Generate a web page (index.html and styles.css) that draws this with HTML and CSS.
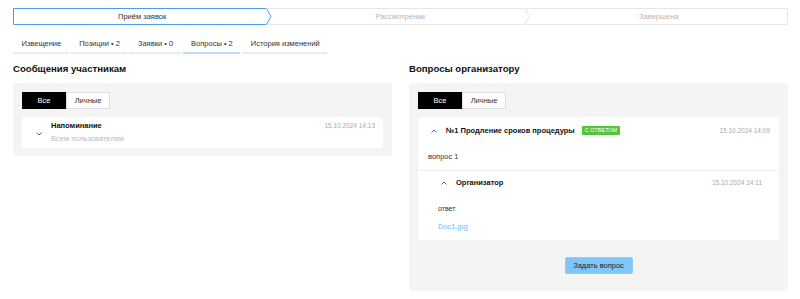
FILE: index.html
```html
<!DOCTYPE html>
<html lang="ru">
<head>
    <meta charset="UTF-8">
    <meta name="viewport" content="width=device-width, initial-scale=1.0">
    <title>Вопросы</title>
    <link rel="stylesheet" href="styles.css">
</head>
<body>
    <div class="stepper">
        <div class="step active">
            <svg class="step-shape"><polygon points="0.5,0.5 253.5,0.5 258,8.5 253.5,16.5 0.5,16.5"/></svg>
            <span>Приём заявок</span>
        </div>
        <div class="step">
            <svg class="step-shape"><polyline points="-4.5,0.5 253.5,0.5 258,8.5 253.5,16.5 -4.5,16.5"/></svg>
            <span>Рассмотрение</span>
        </div>
        <div class="step">
            <svg class="step-shape"><polyline points="-4.5,0.5 257.5,0.5 257.5,16.5 -4.5,16.5"/></svg>
            <span>Завершена</span>
        </div>
    </div>

    <div class="tabs">
        <div class="tab">Извещение</div>
        <div class="tab">Позиции • 2</div>
        <div class="tab">Заявки • 0</div>
        <div class="tab active">Вопросы • 2</div>
        <div class="tab">История изменений</div>
    </div>

    <div class="columns">
        <div class="column">
            <h2>Сообщения участникам</h2>
            <div class="panel panel-short">
                <div class="switch">
                    <button class="on">Все</button>
                    <button>Личные</button>
                </div>
                <div class="card message">
                    <svg class="chevron" viewBox="0 0 6 4"><polyline points="0.5,0.5 3,3 5.5,0.5"/></svg>
                    <div class="message-text">
                        <div class="title">Напоминание</div>
                        <div class="sub">Всем пользователям</div>
                    </div>
                    <div class="date">15.10.2024 14:13</div>
                </div>
            </div>
        </div>

        <div class="column">
            <h2>Вопросы организатору</h2>
            <div class="panel">
                <div class="switch">
                    <button class="on">Все</button>
                    <button>Личные</button>
                </div>
                <div class="card question">
                    <div class="q-head">
                        <svg class="chevron" viewBox="0 0 6 4"><polyline points="0.5,3.5 3,1 5.5,3.5"/></svg>
                        <span class="title">№1 Продление сроков процедуры</span>
                        <span class="badge">С ОТВЕТОМ</span>
                        <span class="date">15.10.2024 14:09</span>
                    </div>
                    <div class="q-text">вопрос 1</div>
                    <div class="answer">
                        <div class="q-head">
                            <svg class="chevron" viewBox="0 0 6 4"><polyline points="0.5,3.5 3,1 5.5,3.5"/></svg>
                            <span class="title">Организатор</span>
                            <span class="date">15.10.2024 14:11</span>
                        </div>
                        <div class="a-text">ответ</div>
                        <a class="file" href="#">Doc1.jpg</a>
                    </div>
                </div>
                <div class="actions">
                    <button class="ask">Задать вопрос</button>
                </div>
            </div>
        </div>
    </div>
</body>
</html>
```

FILE: styles.css
```css
body {
    margin: 0;
    padding: 8px 12px 0 13px;
    font-family: "Liberation Sans", Arial, sans-serif;
    font-size: 7.5px;
    color: #333;
    background: #fff;
}

/* stepper */
.stepper {
    display: flex;
    height: 17px;
}
.step {
    flex: 1;
    display: grid;
    place-items: center;
    color: #b5b5b5;
}
.step > * {
    grid-area: 1 / 1;
}
.step-shape {
    width: 100%;
    height: 17px;
    overflow: visible;
}
.step-shape polygon,
.step-shape polyline {
    fill: none;
    stroke: #e6e6e6;
    stroke-width: 1;
}
.step.active {
    color: #333;
}
.step.active .step-shape polygon {
    stroke: #4b9fe2;
}
.step span {
    position: relative;
}

/* tabs */
.tabs {
    display: flex;
    gap: 2px;
    margin-top: 8px;
    width: 314px;
}
.tab {
    padding: 5px 7.5px 3px 8.5px;
    line-height: 11px;
    border-bottom: 2px solid #ececec;
    color: #333;
    white-space: nowrap;
}
.tab:last-child {
    flex: 1;
}
.tab.active {
    border-bottom-color: #b7ddfa;
}

/* columns */
.columns {
    display: grid;
    grid-template-columns: 379px 379px;
    gap: 17px;
    align-items: start;
}
h2 {
    font-size: 9.6px;
    line-height: 12px;
    margin: 9px 0 8px;
    color: #111;
}
.panel {
    background: #f4f4f4;
    border-radius: 4px;
    padding: 9px 9px 17px;
}
.panel-short {
    padding-bottom: 8px;
}

.switch {
    display: flex;
    margin-bottom: 8px;
}
.switch button {
    width: 44px;
    height: 17px;
    border: 1px solid #ddd;
    background: #fff;
    color: #333;
    font-family: inherit;
    font-size: 7.5px;
    padding: 0;
}
.switch button.on {
    background: #000;
    border-color: #000;
    color: #fff;
}

.card {
    background: #fff;
    border-radius: 3px;
}
.chevron {
    width: 6px;
    height: 4px;
    flex: none;
}
.chevron polyline {
    fill: none;
    stroke: #555;
    stroke-width: 0.9;
}
.title {
    font-weight: bold;
    color: #111;
    line-height: 11px;
}
.date {
    margin-left: auto;
    font-size: 6.5px;
    color: #aaa;
    line-height: 11px;
}

.message {
    display: flex;
    align-items: flex-start;
    padding: 3px 8px 4px 14px;
}
.message .chevron {
    margin: 12px 9px 0 0;
}
.sub {
    margin-top: 2px;
    line-height: 11px;
    color: #bbb;
}

.q-head {
    display: flex;
    align-items: center;
    padding: 8px 9px 0 13px;
}
.q-head .chevron {
    margin-right: 9px;
}
.badge {
    background: #55c43b;
    color: #fff;
    font-size: 5.5px;
    line-height: 9px;
    padding: 0 3px;
    border-radius: 1px;
    margin-left: 7px;
}
.q-text {
    padding: 15px 10px 8px;
    line-height: 11px;
}
.answer {
    border-top: 1px solid #eee;
    padding: 0 8px 8px 10px;
}
.answer .q-head {
    padding: 6px 9px 0 13px;
}
.a-text {
    padding: 15px 10px 0;
    line-height: 11px;
    font-size: 7px;
}
.file {
    display: block;
    margin: 7px 10px 0;
    line-height: 11px;
    color: #72bcf3;
    text-decoration: none;
}

.actions {
    display: flex;
    justify-content: center;
    margin-top: 17px;
}
.ask {
    width: 68px;
    height: 17px;
    padding: 0;
    border: 1px solid #8ccdfa;
    border-radius: 2px;
    background: #7fc7fb;
    color: #222;
    font-family: inherit;
    font-size: 7.5px;
}
```
